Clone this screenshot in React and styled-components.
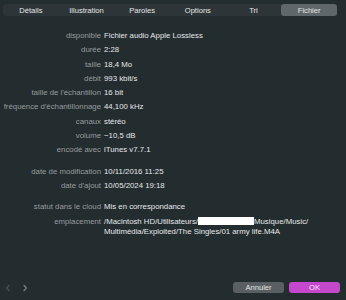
import React from 'react';
import styled, { createGlobalStyle } from 'styled-components';

const GlobalStyle = createGlobalStyle`
  html, body {
    margin: 0;
    padding: 0;
    background: #232d30;
  }
  body {
    font-family: 'Liberation Sans', Arial, sans-serif;
    -webkit-font-smoothing: antialiased;
  }
`;

const Window = styled.div`
  width: 346px;
  height: 300px;
  box-sizing: border-box;
  padding: 4px 9px 7px 3px;
  display: flex;
  flex-direction: column;
  background: #232d30;
`;

const TabBar = styled.div`
  display: grid;
  grid-template-columns: repeat(6, 1fr);
  height: 12px;
  background: #2e3538;
  border-radius: 3px;
`;

const Tab = styled.div`
  display: flex;
  align-items: center;
  justify-content: center;
  font-size: 7.6px;
  color: #e3e5e6;
  border-radius: 3px;
  background: ${(p) => (p.$active ? '#60676a' : 'transparent')};
`;

const Info = styled.div`
  display: flex;
  flex-direction: column;
  padding-top: 15px;
`;

const Group = styled.div`
  display: flex;
  flex-direction: column;
  gap: 4.3px;
  & + & {
    margin-top: 11.3px;
  }
`;

const Row = styled.div`
  display: grid;
  grid-template-columns: 98px 1fr;
  column-gap: 3px;
  font-size: 7.8px;
  line-height: 10px;
`;

const Label = styled.div`
  text-align: right;
  color: #979c9e;
  white-space: nowrap;
`;

const Value = styled.div`
  color: #e6e8e9;
  padding-right: 20px;
`;

const Redacted = styled.span`
  display: inline-block;
  width: 56px;
  height: 8px;
  background: #ffffff;
  vertical-align: -1px;
`;

const Footer = styled.div`
  margin-top: auto;
  display: flex;
  align-items: center;
  justify-content: space-between;
  padding-left: 1px;
`;

const Arrows = styled.div`
  display: flex;
  gap: 9px;
  align-items: center;
`;

const Buttons = styled.div`
  display: flex;
  gap: 5px;
  margin-right: -3px;
`;

const Button = styled.div`
  width: 51px;
  height: 11px;
  border-radius: 3px;
  display: flex;
  align-items: center;
  justify-content: center;
  font-size: 7.6px;
  color: ${(p) => (p.$primary ? '#f3e6f4' : '#e3e5e6')};
  background: ${(p) => (p.$primary ? '#c547cc' : '#595f62')};
`;

const Chevron = ({ dir, color }) => (
  <svg width="8" height="8" viewBox="0 0 8 8">
    <path
      d={dir === 'left' ? 'M5 1.5 L2.5 4 L5 6.5' : 'M3 1.5 L5.5 4 L3 6.5'}
      fill="none"
      stroke={color}
      strokeWidth="1.2"
      strokeLinecap="round"
      strokeLinejoin="round"
    />
  </svg>
);

const tabs = ['Détails', 'Illustration', 'Paroles', 'Options', 'Tri', 'Fichier'];

const groups = [
  [
    ['disponible', 'Fichier audio Apple Lossless'],
    ['durée', '2:28'],
    ['taille', '18,4 Mo'],
    ['débit', '993 kbit/s'],
    ["taille de l'échantillon", '16 bit'],
    ["fréquence d'échantillonnage", '44,100 kHz'],
    ['canaux', 'stéréo'],
    ['volume', '−10,5 dB'],
    ['encodé avec', 'iTunes v7.7.1'],
  ],
  [
    ['date de modification', '10/11/2016 11:25'],
    ["date d'ajout", '10/05/2024 19:18'],
  ],
  [
    ['statut dans le cloud', 'Mis en correspondance'],
    [
      'emplacement',
      <>
        /Macintosh HD/Utilisateurs/<Redacted />Musique/Music/
        <br />
        Multimédia/Exploited/The Singles/01 army life.M4A
      </>,
    ],
  ],
];

export default function App() {
  return (
    <>
      <GlobalStyle />
      <Window>
        <TabBar>
          {tabs.map((t) => (
            <Tab key={t} $active={t === 'Fichier'}>
              {t}
            </Tab>
          ))}
        </TabBar>
        <Info>
          {groups.map((g, i) => (
            <Group key={i}>
              {g.map(([label, value]) => (
                <Row key={label}>
                  <Label>{label}</Label>
                  <Value>{value}</Value>
                </Row>
              ))}
            </Group>
          ))}
        </Info>
        <Footer>
          <Arrows>
            <Chevron dir="left" color="#4a5356" />
            <Chevron dir="right" color="#7c8487" />
          </Arrows>
          <Buttons>
            <Button>Annuler</Button>
            <Button $primary>OK</Button>
          </Buttons>
        </Footer>
      </Window>
    </>
  );
}
